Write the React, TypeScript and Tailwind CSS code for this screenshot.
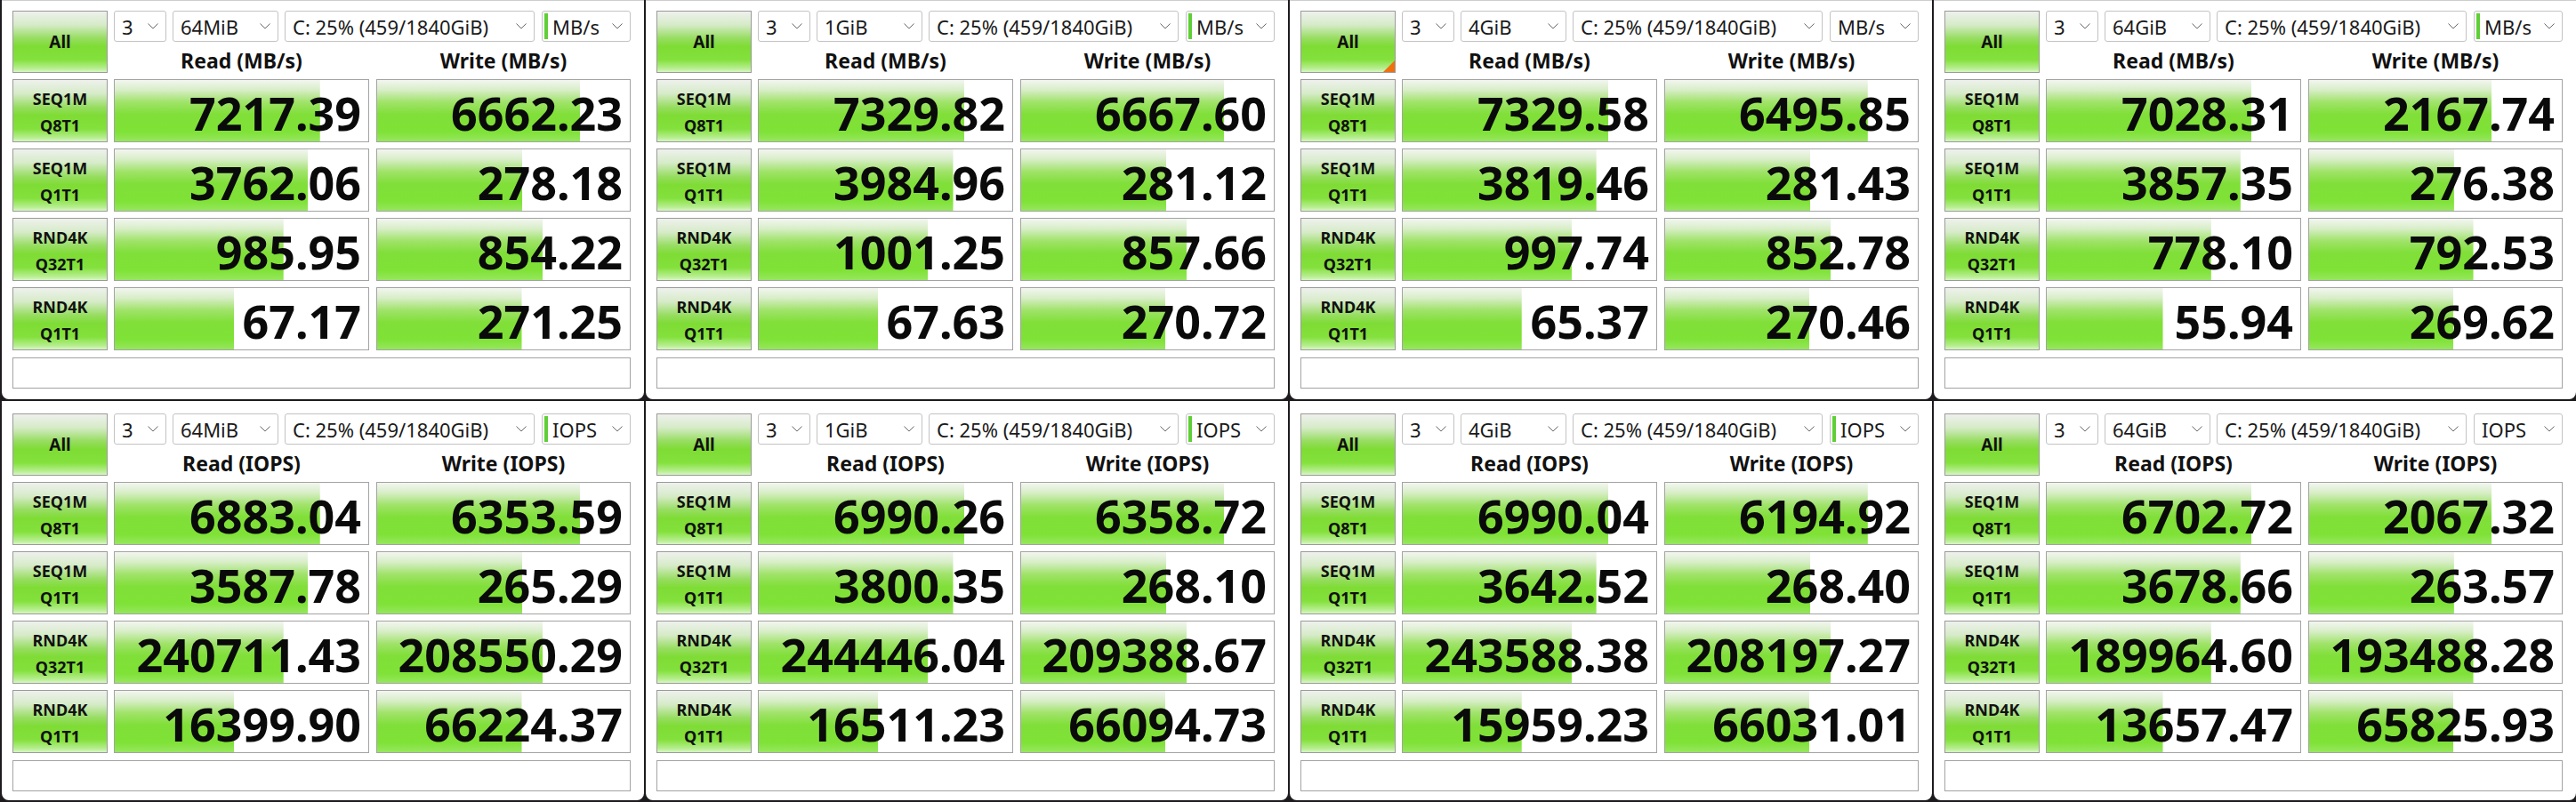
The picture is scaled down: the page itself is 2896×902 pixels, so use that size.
import clsx from "clsx";

type Cfg = {
  size: string;
  unit: "MB/s" | "IOPS";
  read: string[];
  write: string[];
  focus: boolean;
  mark?: boolean;
};

const TESTS = [
  ["SEQ1M", "Q8T1"],
  ["SEQ1M", "Q1T1"],
  ["RND4K", "Q32T1"],
  ["RND4K", "Q1T1"],
];

const PANELS: Cfg[] = [
  { size: "64MiB", unit: "MB/s", focus: true, read: ["7217.39", "3762.06", "985.95", "67.17"], write: ["6662.23", "278.18", "854.22", "271.25"] },
  { size: "1GiB", unit: "MB/s", focus: true, read: ["7329.82", "3984.96", "1001.25", "67.63"], write: ["6667.60", "281.12", "857.66", "270.72"] },
  { size: "4GiB", unit: "MB/s", focus: false, mark: true, read: ["7329.58", "3819.46", "997.74", "65.37"], write: ["6495.85", "281.43", "852.78", "270.46"] },
  { size: "64GiB", unit: "MB/s", focus: true, read: ["7028.31", "3857.35", "778.10", "55.94"], write: ["2167.74", "276.38", "792.53", "269.62"] },
  { size: "64MiB", unit: "IOPS", focus: true, read: ["6883.04", "3587.78", "240711.43", "16399.90"], write: ["6353.59", "265.29", "208550.29", "66224.37"] },
  { size: "1GiB", unit: "IOPS", focus: true, read: ["6990.26", "3800.35", "244446.04", "16511.23"], write: ["6358.72", "268.10", "209388.67", "66094.73"] },
  { size: "4GiB", unit: "IOPS", focus: true, read: ["6990.04", "3642.52", "243588.38", "15959.23"], write: ["6194.92", "268.40", "208197.27", "66031.01"] },
  { size: "64GiB", unit: "IOPS", focus: false, read: ["6702.72", "3678.66", "189964.60", "13657.47"], write: ["2067.32", "263.57", "193488.28", "65825.93"] },
];

// meter is log scale on MB/s, IOPS converted back by block size
function meter(value: string, unit: string, row: number) {
  let mb = parseFloat(value);
  if (unit === "IOPS") mb = row < 2 ? mb * 1.048576 : (mb * 4096) / 1e6;
  const f = (Math.log10(mb) + 1) / 6;
  return Math.max(0, Math.min(1, f)) * 100;
}

function Chevron() {
  return (
    <svg width="12" height="7" viewBox="0 0 12 7" fill="none" stroke="#6a6a6a" strokeWidth="1">
      <polyline points="0.5,0.5 6,6 11.5,0.5" />
    </svg>
  );
}

function Combo({ text, w, focus }: { text: string; w: string; focus?: boolean }) {
  return (
    <div className={clsx("flex h-[35px] items-center justify-between rounded-[3px] border border-[#c3c3c3] bg-white pr-[8px]", w, focus ? "pl-[2px]" : "pl-[8px]")}>
      <div className="flex items-center">
        {focus && <div className="mr-[5px] h-[29px] w-[4px] bg-[#5fcf36]" />}
        <span className="text-[22px] leading-none text-[#1a1a1a]">{text}</span>
      </div>
      <Chevron />
    </div>
  );
}

const BTN =
  "border border-[#9a9a9a] bg-[linear-gradient(to_bottom,#eef1ec_0%,#d6ebc8_22%,#97dd62_44%,#7edc34_58%,#84e13d_80%,#b7ee90_94%,#d8f6c4_100%)]";
const BAR =
  "bg-white bg-no-repeat bg-[linear-gradient(to_bottom,#f3f6f0_0%,#d8eec8_16%,#a0e36a_36%,#80df38_56%,#7fe236_84%,#96e75e_100%)]";

function Panel({ cfg, top }: { cfg: Cfg; top: boolean }) {
  const unitLabel = cfg.unit === "MB/s" ? "(MB/s)" : "(IOPS)";
  return (
    <div className="h-[451px] w-[724px] bg-[#1e1b1e] pb-[2px] pl-[2px]">
      <div
        className={clsx(
          "flex h-full flex-col gap-[7px] rounded-b-[8px] bg-white pl-[12px] font-['Noto_Sans',sans-serif] text-[#111]",
          top ? "border-t border-[#cdcdcd] pt-[11px]" : "pt-[14px]",
        )}
      >
        <div className="flex h-[70px]">
          <div className={clsx("relative flex w-[107px] items-center justify-center", BTN)}>
            <span className="text-[19px] font-bold leading-none">All</span>
            {cfg.mark && (
              <div className="absolute bottom-0 right-0 h-0 w-0 border-b-[13px] border-l-[13px] border-b-[#f07010] border-l-transparent" />
            )}
          </div>
          <div className="ml-[7px] flex flex-col">
            <div className="flex">
              <Combo text="3" w="w-[59px]" />
              <div className="ml-[7px]"><Combo text={cfg.size} w="w-[119px]" /></div>
              <div className="ml-[7px]"><Combo text="C: 25% (459/1840GiB)" w="w-[281px]" /></div>
              <div className="ml-[8px]"><Combo text={cfg.unit} w="w-[100px]" focus={cfg.focus} /></div>
            </div>
            <div className="flex h-[42px] items-center pt-[8px] text-[23px] font-bold leading-none">
              <div className="w-[287px] text-center">Read {unitLabel}</div>
              <div className="ml-[8px] w-[286px] text-center">Write {unitLabel}</div>
            </div>
          </div>
        </div>
        {TESTS.map(([a, b], i) => (
          <div key={i} className="flex h-[71px]">
            <div className={clsx("flex w-[107px] flex-col items-center justify-center pt-[2px] text-[18px] font-bold leading-[30px]", BTN)}>
              <span>{a}</span>
              <span>{b}</span>
            </div>
            {[cfg.read[i], cfg.write[i]].map((v, j) => (
              <div
                key={j}
                className={clsx(
                  "flex items-center justify-end border border-[#a3a3a3] pr-[8px] pt-[5px] text-[52px] font-bold leading-none text-[#0a0a0a]",
                  BAR,
                  j === 0 ? "ml-[7px] w-[287px]" : "ml-[8px] w-[286px]",
                )}
                style={{ backgroundSize: `${meter(v, cfg.unit, i)}% 100%` }}
              >
                {v}
              </div>
            ))}
          </div>
        ))}
        <div className="mt-[1px] h-[35px] w-[695px] border border-[#a3a3a3] bg-white" />
      </div>
    </div>
  );
}

export default function App() {
  return (
    <div className="grid h-[902px] w-[2896px] grid-cols-[repeat(4,724px)] overflow-hidden bg-[#1e1b1e]">
      {PANELS.map((p, i) => (
        <Panel key={i} cfg={p} top={i < 4} />
      ))}
    </div>
  );
}
